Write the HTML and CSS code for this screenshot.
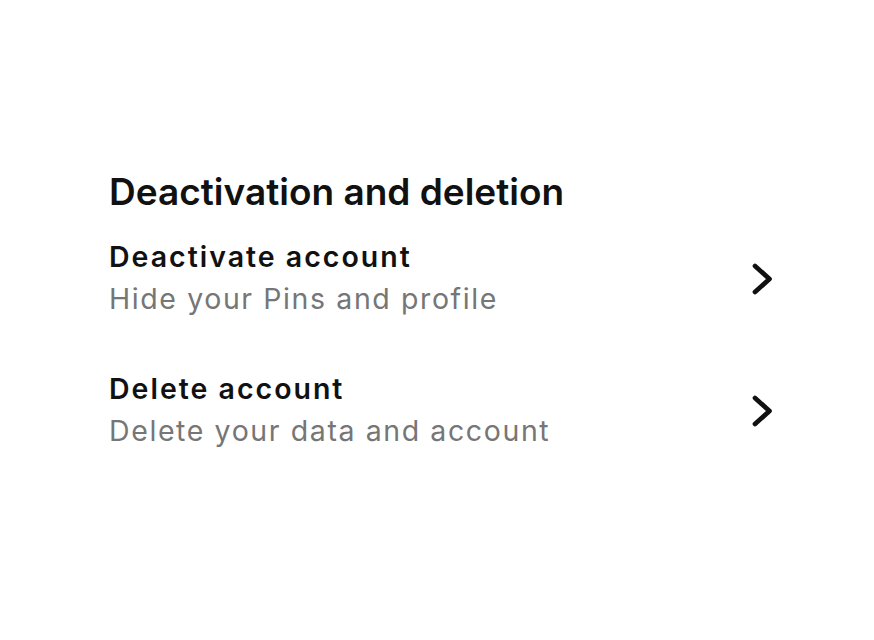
FILE: index.html
```html
<!DOCTYPE html>
<html lang="en">
<head>
    <meta charset="UTF-8">
    <meta name="viewport" content="width=device-width, initial-scale=1.0">
    <title>Deactivation and deletion</title>
    <link rel="stylesheet" href="styles.css">
</head>
<body>

<main class="settings">
    <h2 class="section-title">Deactivation and deletion</h2>

    <a class="option" href="#">
        <div class="option-text">
            <span class="option-name">Deactivate account</span>
            <span class="option-desc">Hide your Pins and profile</span>
        </div>
        <svg class="chevron" width="24" height="38" viewBox="0 0 24 38">
            <path d="M5 7 L19.5 20 L5 33" fill="none" stroke="#111" stroke-width="4.7" stroke-linecap="round" stroke-linejoin="round"/>
        </svg>
    </a>

    <a class="option" href="#">
        <div class="option-text">
            <span class="option-name">Delete account</span>
            <span class="option-desc">Delete your data and account</span>
        </div>
        <svg class="chevron" width="24" height="38" viewBox="0 0 24 38">
            <path d="M5 7 L19.5 20 L5 33" fill="none" stroke="#111" stroke-width="4.7" stroke-linecap="round" stroke-linejoin="round"/>
        </svg>
    </a>
</main>

</body>
</html>
```

FILE: styles.css
```css
body {
    margin: 0;
    font-family: Inter, "Liberation Sans", sans-serif;
    background-color: white;
    color: #111;
}
.settings {
    width: 665px;
    padding: 170px 0 0 109px;
}
.section-title {
    margin: 0 0 22px;
    font-size: 37px;
    font-weight: 600;
    line-height: 44px;
}
.option {
    display: flex;
    align-items: center;
    justify-content: space-between;
    margin-bottom: 48px;
    color: inherit;
    text-decoration: none;
}
.option-text {
    display: flex;
    flex-direction: column;
}
.option-name {
    font-size: 28.5px;
    font-weight: 600;
    line-height: 42px;
    letter-spacing: 2px;
}
.option-desc {
    font-size: 28.5px;
    line-height: 42px;
    color: #767676;
    letter-spacing: 1.6px;
}
.chevron {
    display: block;
}
```
